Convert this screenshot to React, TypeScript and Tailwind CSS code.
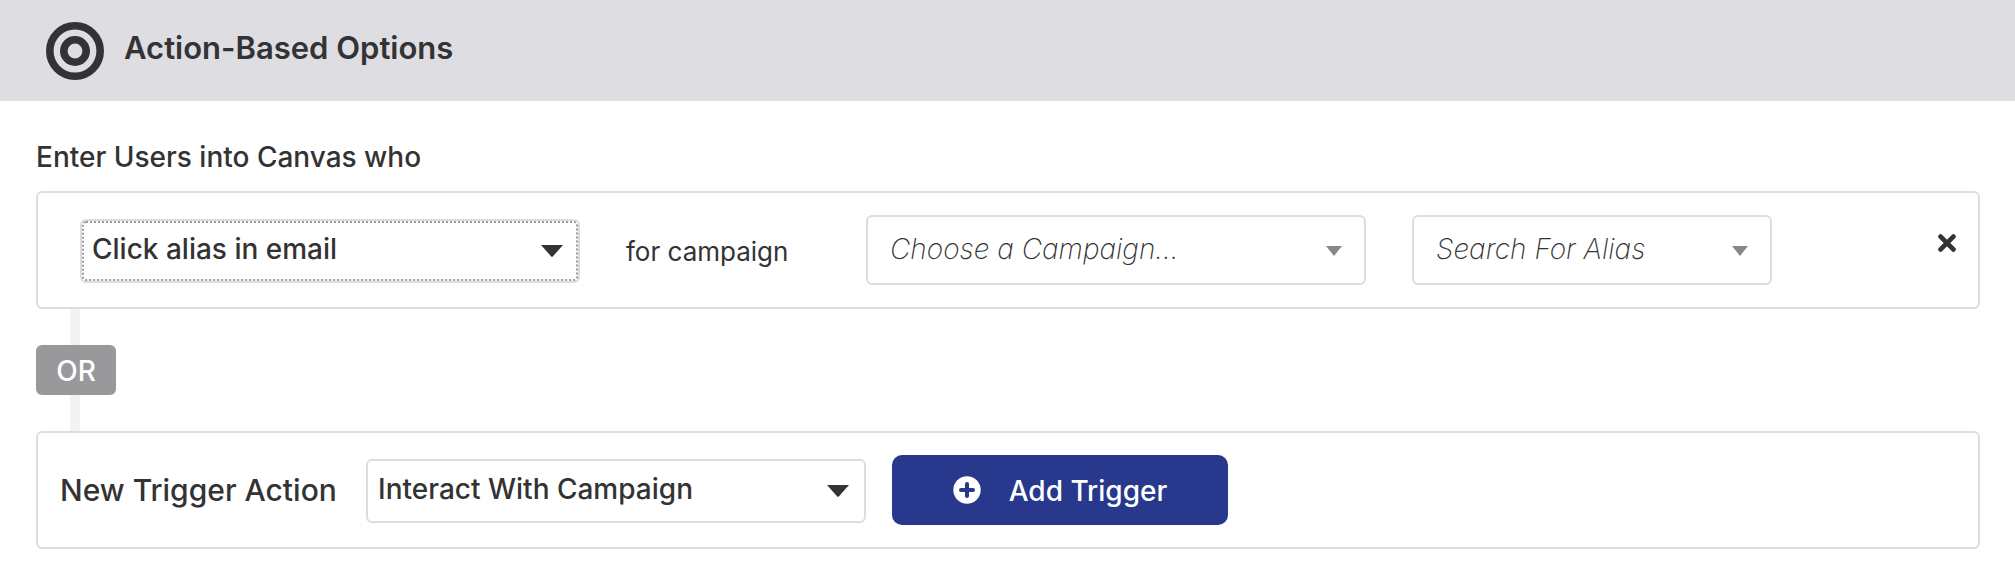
import { useState } from "react";

const font = "font-['Inter','Liberation_Sans',sans-serif]";

function Caret({ muted = false }: { muted?: boolean }) {
  return muted ? (
    <svg className="pointer-events-none col-start-1 row-start-1 mt-0.5 mr-6 h-[10px] w-4 justify-self-end" viewBox="0 0 16 10" aria-hidden="true">
      <path d="M0 0h16L8 10z" fill="#88888a" />
    </svg>
  ) : (
    <svg className="pointer-events-none col-start-1 row-start-1 mr-[17px] h-3 w-[22px] justify-self-end" viewBox="0 0 22 12" aria-hidden="true">
      <path d="M0 0h22L12 11.3q-1 1-2 0z" fill="#333335" />
    </svg>
  );
}

type PickerProps = {
  label: string;
  id: string;
  options: string[];
  variant?: "solid" | "placeholder";
  focused?: boolean;
  width: string;
};

function Picker({ label, id, options, variant = "solid", focused = false, width }: PickerProps) {
  const [value, setValue] = useState(options[0]);
  const placeholder = variant === "placeholder";
  const look = placeholder
    ? "h-[70px] pl-[22px] pr-12 pb-0.5 text-[28px] font-extralight italic"
    : "h-16 pl-[10px] pr-12 pb-1 text-[28px] font-medium";
  const ring = focused ? "outline-2 -outline-offset-4 outline-dotted outline-[#9a9a9c]" : "outline-none";
  return (
    <div className={`grid shrink items-center ${placeholder ? "" : "pt-0.5"} ${width}`}>
      <select
        id={id}
        aria-label={label}
        value={value}
        onChange={(e) => setValue(e.target.value)}
        className={`col-start-1 row-start-1 w-full appearance-none rounded-md border-2 border-[#dddce1] bg-white text-[#333335] ${look} ${ring}`}
      >
        {options.map((o) => (
          <option key={o}>{o}</option>
        ))}
      </select>
      <Caret muted={placeholder} />
    </div>
  );
}

export default function App() {
  return (
    <div className={`${font} bg-white text-[#333335]`}>
      <header className="flex h-[101px] items-center gap-5 bg-[#dedde2] pl-[46px]">
        <svg className="size-[58px]" viewBox="0 0 58 58" fill="none" stroke="#333335" strokeWidth="7.6" aria-hidden="true">
          <circle cx="29" cy="29" r="25.2" />
          <circle cx="29" cy="29" r="11.2" />
        </svg>
        <h1 className="pb-1 text-[31px] font-semibold">Action-Based Options</h1>
      </header>

      <main className="pt-9 pr-[35px] pl-9">
        <h2 className="mb-[14px] text-[28px] leading-10 font-medium">Enter Users into Canvas who</h2>

        <section className="flex h-[118px] items-center rounded-md border-2 border-[#dddce1] pr-[22px] pl-[42px]">
          <Picker id="trigger" label="Trigger" options={["Click alias in email"]} focused width="w-[500px]" />
          <span className="mx-[46px] w-[194px] pt-0.5 text-[26px] whitespace-nowrap">for campaign</span>
          <Picker id="campaign" label="Campaign" options={["Choose a Campaign..."]} variant="placeholder" width="w-[500px]" />
          <div className="w-[46px]" />
          <Picker id="alias" label="Alias" options={["Search For Alias"]} variant="placeholder" width="w-[360px]" />
          <button type="button" aria-label="Remove trigger" className="mb-[14px] ml-auto">
            <svg className="size-[18px]" viewBox="0 0 18 18" stroke="#333335" strokeWidth="4.8" strokeLinecap="round" aria-hidden="true">
              <path d="M2.6 2.6l12.8 12.8M15.4 2.6L2.6 15.4" />
            </svg>
          </button>
        </section>

        <div className="w-20">
          <div className="ml-[34px] h-9 w-[10px] bg-[#f3f3f6]" />
          <div className="flex h-[50px] w-full items-center justify-center rounded-md bg-[#99999b] pt-0.5 text-[28px] font-medium text-white">OR</div>
          <div className="ml-[34px] h-9 w-[10px] bg-[#f3f3f6]" />
        </div>

        <section className="flex h-[118px] items-center rounded-md border-2 border-[#dddce1] pl-[22px]">
          <label htmlFor="new-trigger" className="w-[306px] text-[30px] font-medium whitespace-nowrap">New Trigger Action</label>
          <Picker id="new-trigger" label="New Trigger Action" options={["Interact With Campaign"]} width="w-[500px]" />
          <button type="button" className="ml-[26px] flex h-[70px] w-[336px] items-center justify-center gap-7 rounded-[10px] bg-[#28388c] text-[28px] font-medium text-white">
            <svg className="size-7" viewBox="0 0 28 28" aria-hidden="true">
              <circle cx="14" cy="14" r="13.7" fill="white" />
              <path d="M14 8v12M8 14h12" stroke="#28388c" strokeWidth="4" strokeLinecap="round" />
            </svg>
            <span className="pt-0.5">Add Trigger</span>
          </button>
        </section>
      </main>
    </div>
  );
}
